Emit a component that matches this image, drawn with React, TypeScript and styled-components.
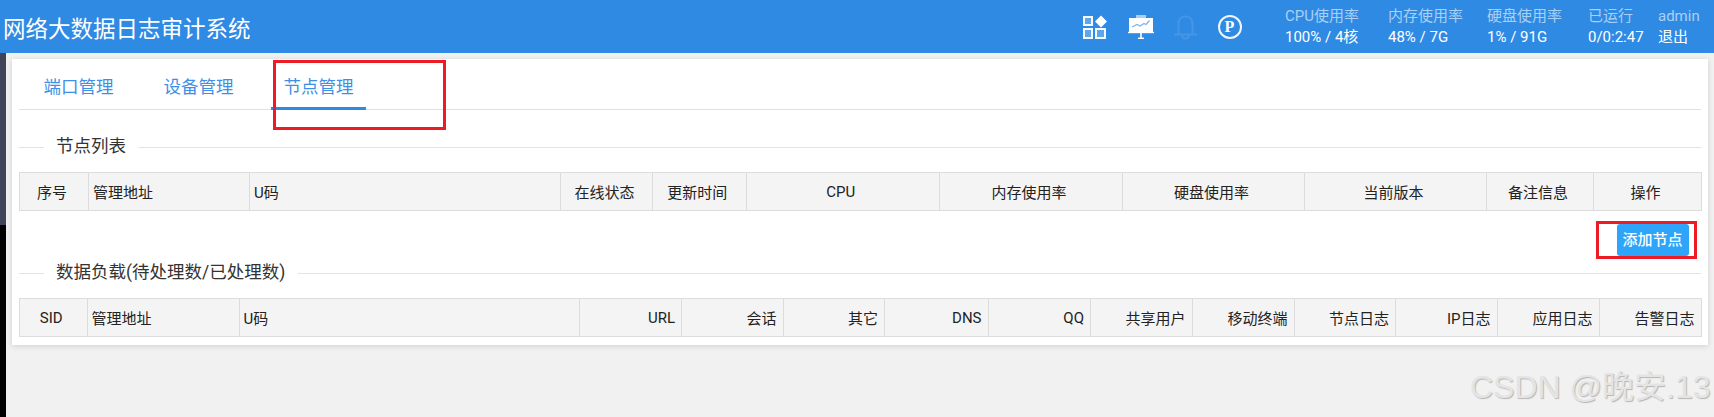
import React from "react";
import styled, { createGlobalStyle } from "styled-components";

const Global = createGlobalStyle`
  html, body { margin: 0; padding: 0; height: 100%; overflow: hidden; }
  body { font-family: Roboto, "Noto Sans CJK SC", sans-serif; background: #f1f1f1; }
  * { box-sizing: border-box; }
`;

const Page = styled.div`
  position: relative;
  width: 1714px;
  height: 417px;
  display: flex;
  flex-direction: column;
  overflow: hidden;
`;

const Header = styled.header`
  height: 53px;
  flex: none;
  background: #2f8ae4;
  display: flex;
  align-items: center;
  justify-content: space-between;
  padding-left: 3px;
`;

const Title = styled.h1`
  margin: 0;
  font-size: 22.5px;
  font-weight: 400;
  color: #fff;
  white-space: nowrap;
`;

const HeaderRight = styled.div`
  display: flex;
  align-items: center;
  width: 631px;
`;

const Icons = styled.div`
  display: flex;
  align-items: center;
  gap: 20.5px;
  width: 202px;
`;

const PBadge = styled.span`
  width: 24px;
  height: 24px;
  border: 2px solid #f2f7fd;
  border-radius: 50%;
  display: flex;
  align-items: center;
  justify-content: center;
  font: bold 16px/1 "Liberation Serif", serif;
  color: #fff;
`;

const Stat = styled.div<{ $w: number }>`
  width: ${(p) => p.$w}px;
  flex: none;
  display: flex;
  flex-direction: column;
  gap: 3px;
  font-size: 15px;
  line-height: 18px;
  white-space: nowrap;
`;

const StatLabel = styled.span`
  color: #a9d0f5;
`;

const StatValue = styled.span`
  color: #fff;
`;

const Body = styled.div`
  flex: 1;
  display: flex;
  min-height: 0;
`;

const Side = styled.aside`
  width: 6px;
  flex: none;
  display: flex;
  flex-direction: column;
`;

const SideTop = styled.div`
  height: 172px;
  background: #3f4459;
`;

const SideRest = styled.div`
  flex: 1;
  background: #000;
`;

const Main = styled.main`
  flex: 1;
  padding: 6px 6px 0;
  min-width: 0;
`;

const Card = styled.section`
  background: #fff;
  box-shadow: 0 1px 6px rgba(0, 0, 0, 0.14);
  padding: 0 7px 8px;
`;

const Tabs = styled.nav`
  height: 51px;
  display: flex;
  gap: 24px;
  padding-left: 12px;
  border-bottom: 1px solid #e0e0e0;
`;

const Tab = styled.a<{ $active?: boolean }>`
  width: 95px;
  margin-right: 1px;
  height: 51px;
  display: flex;
  align-items: center;
  justify-content: center;
  padding-top: 5px;
  font-size: 17.5px;
  color: #3f8fe6;
  border-bottom: 3px solid ${(p) => (p.$active ? "#2f8ae4" : "transparent")};
`;

const Section = styled.div<{ $mt: number }>`
  display: flex;
  align-items: flex-start;
  height: 24px;
  line-height: 22px;
  margin-top: ${(p) => p.$mt}px;
  font-size: 17.5px;
  color: #333;
  white-space: nowrap;
  &::before {
    content: "";
    width: 25px;
    height: 1px;
    margin: 12px 12px 0 0;
    background: #e3e3e3;
  }
  &::after {
    content: "";
    flex: 1;
    height: 1px;
    margin: 12px 0 0 13px;
    background: #e3e3e3;
  }
`;

const Table = styled.table`
  width: 1682px;
  margin-top: 13px;
  table-layout: fixed;
  border-collapse: collapse;
  background: #f4f4f4;
`;

const Col = styled.col<{ $w: number }>`
  width: ${(p) => p.$w}px;
`;

const Th = styled.th<{ $align: string }>`
  height: 38px;
  padding: 0 ${(p) => (p.$align === "center" ? 8 : 6)}px 0 4px;
  border: 1px solid #dcdcdc;
  font-size: 15px;
  font-weight: 400;
  color: #222;
  text-align: ${(p) => p.$align};
  white-space: nowrap;
  overflow: hidden;
`;

const ButtonRow = styled.div`
  display: flex;
  justify-content: flex-end;
  padding: 13px 12px 0 0;
`;

const AddButton = styled.button`
  width: 72px;
  height: 32px;
  padding: 0 1px 3px 0;
  border: 0;
  border-radius: 3px;
  background: #2ea5fb;
  color: #fff;
  font: 500 15px Roboto, "Noto Sans CJK SC", sans-serif;
`;

const Annotation = styled.div<{ $x: number; $y: number; $w: number; $h: number }>`
  position: absolute;
  left: ${(p) => p.$x}px;
  top: ${(p) => p.$y}px;
  width: ${(p) => p.$w}px;
  height: ${(p) => p.$h}px;
  border: 3px solid #ed1c24;
  pointer-events: none;
`;

const Watermark = styled.div`
  position: absolute;
  left: 1470px;
  top: 367px;
  font: 32px/40px "Liberation Sans", "Noto Sans CJK SC", sans-serif;
  color: #e4e4e4;
  text-shadow: 1px 1px 1px #b5b5b5;
  white-space: nowrap;
`;

const GridIcon = () => (
  <svg width="24" height="24" viewBox="0 0 24 24" fill="none">
    <g fill="#5fa5ea" stroke="#f4f9fe" strokeWidth="2">
      <rect x="1" y="2" width="8" height="8" />
      <rect x="1" y="14" width="8" height="9" />
      <rect x="13" y="14" width="9" height="9" />
    </g>
    <path d="M18 0.5 L24 6.5 L18 12.5 L12 6.5 Z" fill="#fff" />
  </svg>
);

const BoardIcon = () => (
  <svg width="26" height="24" viewBox="0 0 26 24" fill="none">
    <rect x="8" y="0" width="10" height="3" fill="#a9cdf3" />
    <rect x="1" y="3" width="24" height="14" fill="#fff" />
    <path d="M0 17.5 H26" stroke="#fff" strokeWidth="1.4" />
    <path d="M4 12 L9 9.5 L12 11 L16 8.5 L18 9.5 L21.5 5.5" stroke="#7fb2ea" strokeWidth="1.2" />
    <path d="M13 18 V23" stroke="#fff" strokeWidth="1.6" />
    <path d="M10 23.3 H16" stroke="#fff" strokeWidth="1.4" />
  </svg>
);

const BellIcon = () => (
  <svg width="23" height="26" viewBox="0 0 23 26" fill="none" stroke="#4595e4" strokeWidth="2.2">
    <path d="M4.5 20 V10 C4.5 5.5 7.5 2.5 11.5 2.5 C15.5 2.5 18.5 5.5 18.5 10 V20" />
    <path d="M0 20.5 H23" />
    <path d="M8 21 A3.5 3.5 0 0 0 15 21" />
  </svg>
);

type Column = { w: number; label: string; align: string };
const c = (w: number, label: string, align: string): Column => ({ w, label, align });

const nodeCols = [
  c(69, "序号", "center"), c(161, "管理地址", "left"), c(311, "U码", "left"),
  c(92, "在线状态", "center"), c(93.5, "更新时间", "center"), c(193.5, "CPU", "center"),
  c(183, "内存使用率", "center"), c(182, "硬盘使用率", "center"), c(182, "当前版本", "center"),
  c(107, "备注信息", "center"), c(108, "操作", "center"),
];

const loadCols = [
  c(67.5, "SID", "center"), c(152, "管理地址", "left"), c(340, "U码", "left"),
  c(102.5, "URL", "right"), c(101.5, "会话", "right"), c(101.5, "其它", "right"),
  c(103.5, "DNS", "right"), c(102.5, "QQ", "right"), c(101.5, "共享用户", "right"),
  c(102, "移动终端", "right"), c(101.5, "节点日志", "right"), c(101.5, "IP日志", "right"),
  c(102, "应用日志", "right"), c(102, "告警日志", "right"),
];

const DataTable = ({ cols }: { cols: Column[] }) => (
  <Table>
    <colgroup>
      {cols.map((col, i) => <Col key={i} $w={col.w} />)}
    </colgroup>
    <thead>
      <tr>
        {cols.map((col, i) => <Th key={i} $align={col.align}>{col.label}</Th>)}
      </tr>
    </thead>
  </Table>
);

const stats = [
  { w: 103, label: "CPU使用率", value: "100% / 4核" },
  { w: 99, label: "内存使用率", value: "48% / 7G" },
  { w: 101, label: "硬盘使用率", value: "1% / 91G" },
  { w: 70, label: "已运行", value: "0/0:2:47" },
  { w: 56, label: "admin", value: "退出" },
];

export default function App() {
  return (
    <Page>
      <Global />
      <Header>
        <Title>网络大数据日志审计系统</Title>
        <HeaderRight>
          <Icons>
            <GridIcon />
            <BoardIcon />
            <BellIcon />
            <PBadge>P</PBadge>
          </Icons>
          {stats.map((s) => (
            <Stat key={s.label} $w={s.w}>
              <StatLabel>{s.label}</StatLabel>
              <StatValue>{s.value}</StatValue>
            </Stat>
          ))}
        </HeaderRight>
      </Header>
      <Body>
        <Side>
          <SideTop />
          <SideRest />
        </Side>
        <Main>
          <Card>
            <Tabs>
              <Tab>端口管理</Tab>
              <Tab>设备管理</Tab>
              <Tab $active>节点管理</Tab>
            </Tabs>
            <Section $mt={25}>节点列表</Section>
            <DataTable cols={nodeCols} />
            <ButtonRow>
              <AddButton>添加节点</AddButton>
            </ButtonRow>
            <Section $mt={5}>数据负载(待处理数/已处理数)</Section>
            <DataTable cols={loadCols} />
          </Card>
        </Main>
      </Body>
      <Annotation $x={273} $y={60} $w={173} $h={70} />
      <Annotation $x={1596} $y={221} $w={101} $h={38} />
      <Watermark>CSDN @晚安.13</Watermark>
    </Page>
  );
}
